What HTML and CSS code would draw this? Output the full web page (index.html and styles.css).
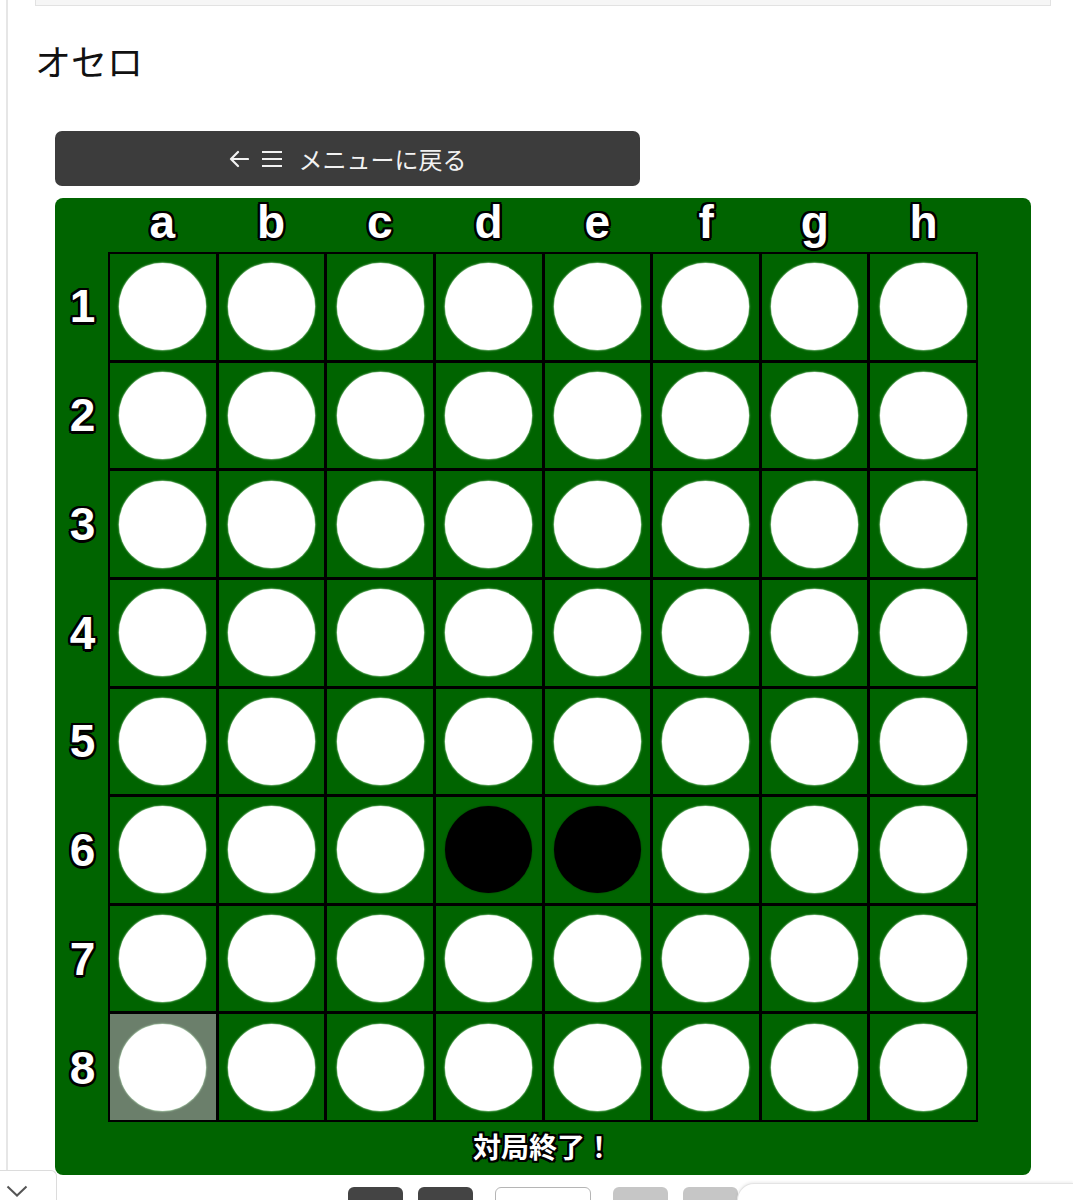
FILE: index.html
```html
<!DOCTYPE html>
<html lang="ja">
<head>
<meta charset="utf-8">
<title>オセロ</title>
<link rel="stylesheet" href="styles.css">
</head>
<body>
<div class="page">
  <div class="topbox"></div>
  <h1 class="title">オセロ</h1>
  <div class="game">
    <button class="back-btn" type="button">
      <svg class="ico-arrow" width="20" height="18" viewBox="0 0 20 18"><path d="M19 9H2M9 2L2 9l7 7" fill="none" stroke="#f2f2f2" stroke-width="2.2" stroke-linecap="round" stroke-linejoin="round"/></svg>
      <svg class="ico-menu" width="22" height="18" viewBox="0 0 22 18"><path d="M1 2h20M1 9h20M1 16h20" fill="none" stroke="#f2f2f2" stroke-width="2.2"/></svg>
      <span class="back-text">メニューに戻る</span>
    </button>
    <div class="board">
      <div class="cols">
        <span>a</span><span>b</span><span>c</span><span>d</span><span>e</span><span>f</span><span>g</span><span>h</span>
      </div>
      <div class="rows">
        <span>1</span><span>2</span><span>3</span><span>4</span><span>5</span><span>6</span><span>7</span><span>8</span>
      </div>
      <div class="grid" id="grid">
        <div class="cell"><i class="piece white"></i></div><div class="cell"><i class="piece white"></i></div><div class="cell"><i class="piece white"></i></div><div class="cell"><i class="piece white"></i></div><div class="cell"><i class="piece white"></i></div><div class="cell"><i class="piece white"></i></div><div class="cell"><i class="piece white"></i></div><div class="cell"><i class="piece white"></i></div>
        <div class="cell"><i class="piece white"></i></div><div class="cell"><i class="piece white"></i></div><div class="cell"><i class="piece white"></i></div><div class="cell"><i class="piece white"></i></div><div class="cell"><i class="piece white"></i></div><div class="cell"><i class="piece white"></i></div><div class="cell"><i class="piece white"></i></div><div class="cell"><i class="piece white"></i></div>
        <div class="cell"><i class="piece white"></i></div><div class="cell"><i class="piece white"></i></div><div class="cell"><i class="piece white"></i></div><div class="cell"><i class="piece white"></i></div><div class="cell"><i class="piece white"></i></div><div class="cell"><i class="piece white"></i></div><div class="cell"><i class="piece white"></i></div><div class="cell"><i class="piece white"></i></div>
        <div class="cell"><i class="piece white"></i></div><div class="cell"><i class="piece white"></i></div><div class="cell"><i class="piece white"></i></div><div class="cell"><i class="piece white"></i></div><div class="cell"><i class="piece white"></i></div><div class="cell"><i class="piece white"></i></div><div class="cell"><i class="piece white"></i></div><div class="cell"><i class="piece white"></i></div>
        <div class="cell"><i class="piece white"></i></div><div class="cell"><i class="piece white"></i></div><div class="cell"><i class="piece white"></i></div><div class="cell"><i class="piece white"></i></div><div class="cell"><i class="piece white"></i></div><div class="cell"><i class="piece white"></i></div><div class="cell"><i class="piece white"></i></div><div class="cell"><i class="piece white"></i></div>
        <div class="cell"><i class="piece white"></i></div><div class="cell"><i class="piece white"></i></div><div class="cell"><i class="piece white"></i></div><div class="cell"><i class="piece black"></i></div><div class="cell"><i class="piece black"></i></div><div class="cell"><i class="piece white"></i></div><div class="cell"><i class="piece white"></i></div><div class="cell"><i class="piece white"></i></div>
        <div class="cell"><i class="piece white"></i></div><div class="cell"><i class="piece white"></i></div><div class="cell"><i class="piece white"></i></div><div class="cell"><i class="piece white"></i></div><div class="cell"><i class="piece white"></i></div><div class="cell"><i class="piece white"></i></div><div class="cell"><i class="piece white"></i></div><div class="cell"><i class="piece white"></i></div>
        <div class="cell last"><i class="piece white"></i></div><div class="cell"><i class="piece white"></i></div><div class="cell"><i class="piece white"></i></div><div class="cell"><i class="piece white"></i></div><div class="cell"><i class="piece white"></i></div><div class="cell"><i class="piece white"></i></div><div class="cell"><i class="piece white"></i></div><div class="cell"><i class="piece white"></i></div>
      </div>
      <div class="status">対局終了！</div>
    </div>
    <div class="toolbar">
      <span class="tb dark"></span>
      <span class="tb dark gap-s"></span>
      <span class="tb outline"></span>
      <span class="tb light"></span>
      <span class="tb light gap-s"></span>
    </div>
  </div>
</div>
<div class="tab-left">
  <svg width="22" height="12" viewBox="0 0 22 12"><path d="M1.5 1.5l9.5 9 9.5-9" fill="none" stroke="#555" stroke-width="2"/></svg>
</div>
<div class="panel-right"></div>
</body>
</html>
```

FILE: styles.css
```css
html {
  overflow: hidden;
}
body {
  margin: 0;
  background: #fff;
  font-family: "Noto Sans CJK JP", "Noto Sans", sans-serif;
  color: #111;
}
.page {
  margin-left: 6px;
  border-left: 2px solid #e6e6e6;
  padding-left: 27px;
  min-height: 1200px;
  width: 1015px;
}
.topbox {
  box-sizing: border-box;
  width: 1016px;
  height: 6px;
  background: #f6f6f6;
  border: 1px solid #e2e2e2;
  border-top: none;
}
.title {
  margin: 33px 0 29px 0;
  font-size: 36px;
  line-height: 43px;
  font-weight: 400;
  color: #111;
}
.game {
  padding: 20px 20px 0 20px;
}
.back-btn {
  display: flex;
  align-items: center;
  justify-content: center;
  width: 585px;
  height: 55px;
  margin: 0 0 12px 0;
  padding: 0;
  border: none;
  border-radius: 7px;
  background: #3c3c3c;
  color: #f2f2f2;
  font-family: "Noto Sans CJK JP", sans-serif;
  font-size: 24px;
  cursor: pointer;
}
.ico-arrow {
  margin-right: 12px;
}
.ico-menu {
  margin-right: 16px;
}
.back-text {
  line-height: 1;
}
.board {
  display: grid;
  grid-template-columns: 53px 870px 53px;
  grid-template-rows: 54px 870px 53px;
  width: 976px;
  height: 977px;
  background: #006400;
  border-radius: 8px;
  font-family: "Liberation Sans", Arial, sans-serif;
  font-weight: 700;
  color: #fff;
}
.cols,
.rows {
  display: grid;
  font-size: 46px;
  text-shadow: -2px -2px 0 #000, 2px -2px 0 #000, -2px 2px 0 #000, 2px 2px 0 #000,
    0 2.5px 0 #000, 0 -2.5px 0 #000, 2.5px 0 0 #000, -2.5px 0 0 #000;
}
.cols {
  grid-column: 2;
  grid-row: 1;
  grid-template-columns: repeat(8, 1fr);
  align-items: center;
  justify-items: center;
}
.cols span {
  line-height: 1;
  margin-top: -6px;
}
.rows {
  grid-column: 1;
  grid-row: 2;
  grid-template-rows: repeat(8, 1fr);
  align-items: center;
  justify-items: center;
}
.rows span {
  line-height: 1;
  margin-left: 2px;
}
.grid {
  grid-column: 2;
  grid-row: 2;
  display: grid;
  grid-template-columns: repeat(8, 1fr);
  grid-template-rows: repeat(8, 1fr);
  gap: 3px;
  padding: 2px;
  background: #000;
}
.cell {
  display: flex;
  align-items: center;
  justify-content: center;
  background: #006400;
}
.cell.last {
  background: #6b7f6b;
}
.piece {
  display: block;
  width: 87px;
  height: 87px;
  border-radius: 50%;
}
.piece.white {
  background: #fff;
  box-shadow: 0 0 1.5px 0.5px rgba(200, 235, 200, 0.9);
}
.piece.black {
  background: #000;
  box-shadow: 0 0 1.5px rgba(0, 0, 0, 0.6);
}
.status {
  grid-column: 1 / -1;
  grid-row: 3;
  display: flex;
  align-items: center;
  justify-content: center;
  font-family: "Noto Sans CJK JP", sans-serif;
  font-weight: 700;
  font-size: 28px;
  line-height: 1;
  padding-bottom: 6px;
  text-shadow: -2px -2px 0 #000, 2px -2px 0 #000, -2px 2px 0 #000, 2px 2px 0 #000,
    0 2px 0 #000, 0 -2px 0 #000, 2px 0 0 #000, -2px 0 0 #000;
}
.toolbar {
  display: flex;
  justify-content: center;
  width: 976px;
  margin-top: 12px;
}
.tb {
  display: block;
  box-sizing: border-box;
  width: 55px;
  height: 40px;
  border-radius: 6px;
  margin-left: 22px;
}
.tb:first-child {
  margin-left: 0;
}
.tb.gap-s {
  margin-left: 15px;
}
.tb.dark {
  background: #444;
}
.tb.outline {
  width: 96px;
  background: #fff;
  border: 1px solid #b5b5b5;
}
.tb.light {
  background: #c6c6c6;
}
.tab-left {
  position: fixed;
  left: 0;
  bottom: 0;
  box-sizing: border-box;
  width: 57px;
  height: 30px;
  background: #fff;
  border: 1px solid #dcdcdc;
  border-left: none;
  border-bottom: none;
  border-top-right-radius: 6px;
  padding: 14px 0 0 6px;
}
.tab-left svg {
  display: block;
}
.panel-right {
  position: fixed;
  left: 737px;
  right: 0;
  bottom: 0;
  height: 16px;
  background: #fff;
  border-top: 1px solid #e4e4e4;
  border-left: 1px solid #e4e4e4;
  border-top-left-radius: 18px;
  box-shadow: 0 -1px 3px rgba(0, 0, 0, 0.08);
}
```
